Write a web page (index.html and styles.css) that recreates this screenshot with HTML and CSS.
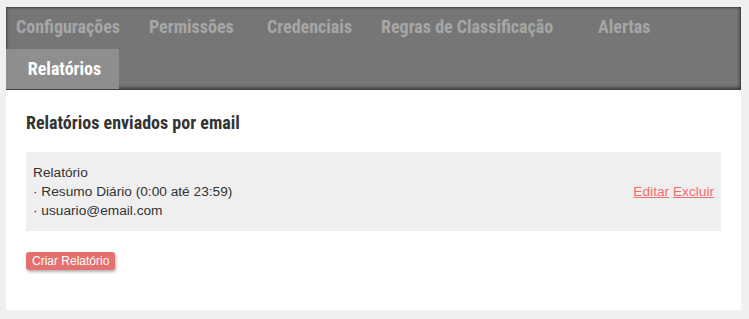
FILE: index.html
```html
<!DOCTYPE html>
<html lang="pt-BR">
<head>
<meta charset="utf-8">
<title>Relatórios</title>
<link rel="stylesheet" href="styles.css">
</head>
<body>
<div class="page">
  <nav class="tabs">
    <div class="tab-row">
      <a class="tab t1">Configurações</a>
      <a class="tab t2">Permissões</a>
      <a class="tab t3">Credenciais</a>
      <a class="tab t4">Regras de Classificação</a>
      <a class="tab t5">Alertas</a>
    </div>
    <div class="tab-row">
      <a class="tab active">Relatórios</a>
    </div>
  </nav>
  <main class="content">
    <h2 class="title">Relatórios enviados por email</h2>
    <div class="report">
      <div class="report-info">
        <div>Relatório</div>
        <div>· Resumo Diário (0:00 até 23:59)</div>
        <div>· usuario@email.com</div>
      </div>
      <div class="report-actions">
        <a class="link" href="#">Editar</a> <a class="link" href="#">Excluir</a>
      </div>
    </div>
    <button class="btn">Criar Relatório</button>
  </main>
</div>
</body>
</html>
```
FILE: styles.css
```css
html, body {
  margin: 0;
  padding: 0;
  background: #f0f0f0;
}
body {
  font-family: "Liberation Sans", Arial, sans-serif;
  color: #333;
}
.page {
  margin: 7px 8px 0 6px;
  background: #fff;
  height: 303px;
}
.tabs {
  background: #767676;
  box-shadow: inset 0 -3px 3px rgba(0,0,0,0.35), inset 0 1px 2px rgba(0,0,0,0.3), inset -2px 0 3px rgba(0,0,0,0.25), inset 2px 0 3px rgba(0,0,0,0.15);
  height: 83px;
}
.tab-row {
  display: flex;
}
.tab-row:first-child {
  height: 38px;
  padding-bottom: 4px;
  align-items: center;
  padding-left: 10px;
}
.tab {
  font-family: "Roboto Condensed", "Liberation Sans Narrow", sans-serif;
  font-weight: bold;
  font-size: 18px;
  color: #a6a6a6;
  text-decoration: none;
  white-space: nowrap;
}
.t1 { width: 133px; }
.t2 { width: 118px; }
.t3 { width: 114px; }
.t4 { width: 217px; }
.active {
  background: #8e8e8e;
  color: #fff;
  height: 40px;
  line-height: 40px;
  width: 113px;
  box-sizing: border-box;
  padding-left: 4px;
  text-align: center;
}
.content {
  padding: 17px 20px 0 20px;
}
.title {
  font-family: "Roboto Condensed", "Liberation Sans Narrow", sans-serif;
  font-size: 18px;
  font-weight: bold;
  margin: 0 0 13px 0;
  line-height: 32px;
  color: #333;
}
.report {
  background: #efefef;
  display: flex;
  justify-content: space-between;
  align-items: center;
  padding: 11px 7px;
  font-size: 13.7px;
  line-height: 19px;
}
.link {
  color: #ef6d6d;
  text-decoration: underline;
}
.btn {
  display: block;
  margin-top: 21px;
  background: #e57070;
  color: #fff;
  border: none;
  border-radius: 3px;
  font-family: "Liberation Sans", Arial, sans-serif;
  font-size: 12px;
  height: 18px;
  padding: 0 6px;
  box-shadow: 1px 2px 3px rgba(0,0,0,0.3);
}
```
